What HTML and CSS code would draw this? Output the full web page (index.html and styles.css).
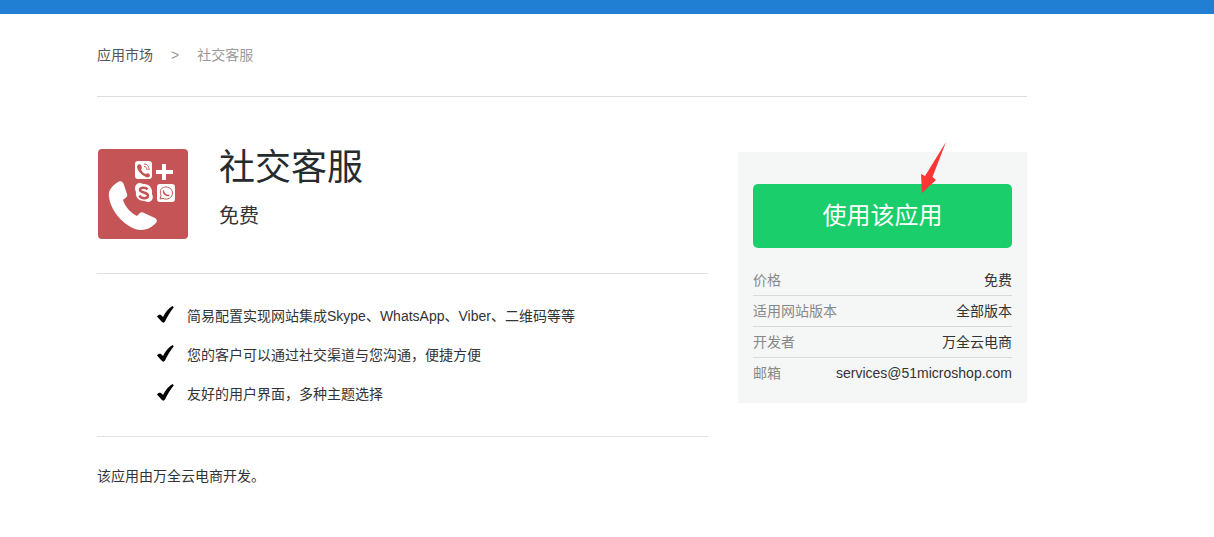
FILE: index.html
```html
<!DOCTYPE html>
<html lang="zh-CN">
<head>
<meta charset="utf-8">
<meta name="viewport" content="width=device-width, initial-scale=1">
<title>社交客服</title>
<link rel="stylesheet" href="styles.css">
</head>
<body>
<svg class="defs" aria-hidden="true">
  <symbol id="tick" viewBox="0 0 17 17"><path d="M0 10.500 C1 9 2.500 8.300 4 9 L6 11 C8.500 6 11.500 2.500 15.500 0 L16.800 1.300 C13 6 10.500 10.500 8 15.500 C7 17 5.500 17 4.500 15.500 Z"/></symbol>
</svg>
<header class="topbar"></header>
<div class="page">
  <nav class="breadcrumb">
    <a href="#">应用市场</a>
    <span class="separator">&gt;</span>
    <span>社交客服</span>
  </nav>
  <div class="columns">
    <main class="content">
      <section class="app">
        <svg class="logo" viewBox="0 0 90 90" role="img" aria-label="社交客服">
          <rect width="90" height="90" rx="4" fill="#c45455"/>
          <path fill="#fff" d="M20 33 C23 31 25 33 26 36 L29 45 C30 48 27 49 25 51 C27 58 33 64 39 67 C41 65 43 62 46 64 L57 69 C60 71 59 73 57 75 C50 82 40 83 31 77 C20 70 12 58 11 48 C10 41 14 37 20 33 Z"/>
          <rect x="37" y="12" width="17" height="18" rx="3" fill="#fff"/>
          <path fill="#c45455" d="M41 15 L43 16 L44 19 L43 20 C44 23 45 24 48 25 L50 24 L52 26 C52 28 50 29 48 28 C43 26 39 21 39 17 Z"/>
          <path fill="none" stroke="#c45455" stroke-width="1" d="M46 15 C49 15 51 17 51 21 M46 17.500 C48 17.500 49 19 49 21"/>
          <path fill="#fff" d="M64 15 h4 v6 h7 v4 h-7 v6 h-4 v-6 h-6 v-4 h6 Z"/>
          <path fill="#fff" d="M41 34 C44 34 44 35 46 35 C51 35 55 39 54 45 C56 49 54 53 50 53 C48 53 48 52 46 52 C41 52 37 48 38 43 C36 39 37 35 41 34 Z"/>
          <path fill="none" stroke="#c45455" stroke-width="2.500" d="M49.500 40.500 C48 38 42 38 42 41 C42 44 50 43 50 46.500 C50 50 43 50 41.500 46.500"/>
          <rect x="59" y="35" width="18" height="18" rx="3" fill="#fff"/>
          <path fill="none" stroke="#c45455" d="M62 50 L63 46.500 C61 41 64 38 68 38 C72 38 74.500 41 74.500 44 C74.500 49 69 51.500 65 49.300 Z"/>
          <path fill="none" stroke="#c45455" stroke-width="1.500" d="M65.500 41.500 C65 44 68 47 71.500 46.500"/>
        </svg>
        <div class="app-text">
          <h1>社交客服</h1>
          <p>免费</p>
        </div>
      </section>
      <ul class="features">
        <li><svg class="tick" aria-hidden="true"><use href="#tick"/></svg>简易配置实现网站集成Skype、WhatsApp、Viber、二维码等等</li>
        <li><svg class="tick" aria-hidden="true"><use href="#tick"/></svg>您的客户可以通过社交渠道与您沟通，便捷方便</li>
        <li><svg class="tick" aria-hidden="true"><use href="#tick"/></svg>友好的用户界面，多种主题选择</li>
      </ul>
      <p class="credit">该应用由万全云电商开发。</p>
    </main>
    <aside class="panel">
      <button class="use-app" type="button">使用该应用</button>
      <svg class="pointer" viewBox="0 0 25 52" aria-hidden="true"><path fill="#fb3634" d="M25 0 L11.500 35 L15 38 L1 51 L0 32 L4 34 Z"/></svg>
      <dl class="details">
        <div><dt>价格</dt><dd>免费</dd></div>
        <div><dt>适用网站版本</dt><dd>全部版本</dd></div>
        <div><dt>开发者</dt><dd>万全云电商</dd></div>
        <div><dt>邮箱</dt><dd>services@51microshop.com</dd></div>
      </dl>
    </aside>
  </div>
</div>
</body>
</html>
```

FILE: styles.css
```css
* {
  box-sizing: border-box;
}

body,
h1,
p,
ul,
dl,
dd {
  margin: 0;
}

body {
  background: #fff;
  color: #333;
  font: 14px/20px "Liberation Sans", "Noto Sans CJK SC", sans-serif;
}

.defs {
  position: absolute;
  width: 0;
  height: 0;
}

.topbar {
  height: 14px;
  background: #217fd3;
}

.page {
  padding: 0 187px 0 97px;
}

.breadcrumb {
  display: flex;
  gap: 18px;
  padding: 31px 0;
  border-bottom: 1px solid #ddd;
  color: #999;
}

.breadcrumb a {
  color: #555;
  text-decoration: none;
}

.columns {
  display: grid;
  grid-template-columns: minmax(0, 1fr) 289px;
  gap: 30px;
  align-items: start;
}

.app {
  display: flex;
  gap: 31px;
  padding: 45px 0 34px 1px;
}

.logo {
  width: 90px;
  height: 90px;
  margin-top: 7px;
}

h1 {
  color: #262b2e;
  font-size: 36px;
  font-weight: 400;
  line-height: 52px;
}

.app-text p {
  font-size: 20px;
  line-height: 45px;
}

.features {
  display: grid;
  gap: 19px;
  padding: 32px 0 32px 60px;
  border: solid #e2e2e2;
  border-width: 1px 0;
  list-style: none;
}

.features li {
  display: flex;
  gap: 13px;
}

.tick {
  flex: none;
  width: 17px;
  height: 17px;
  fill: #000;
}

.credit {
  padding-top: 29px;
}

.panel {
  position: relative;
  margin-top: 55px;
  padding: 32px 15px 15px;
  background: #f5f7f6;
}

.use-app {
  display: block;
  width: 100%;
  height: 64px;
  border: 0;
  border-radius: 5px;
  background: #19ce6b;
  color: #fff;
  font: inherit;
  font-size: 24px;
}

.pointer {
  position: absolute;
  top: -10px;
  right: 81px;
  width: 25px;
  height: 52px;
}

.details {
  padding-top: 17px;
}

.details div {
  display: flex;
  justify-content: space-between;
  padding: 5px 0;
}

.details div + div {
  border-top: 1px solid #d9dbda;
}

.details dt {
  color: #888;
}
```
